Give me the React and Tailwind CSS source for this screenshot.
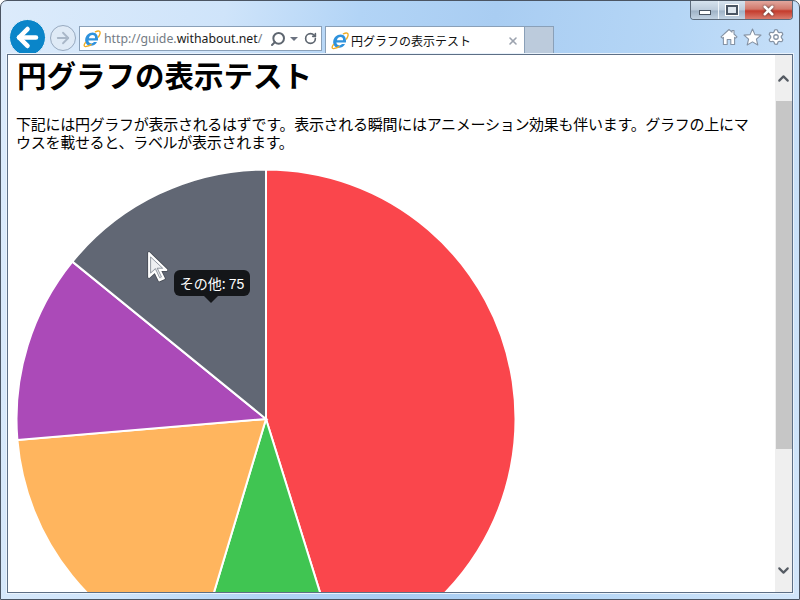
import React from "react";
import { ArrowLeft, ArrowRight, Search, RotateCw, Settings, ChevronUp, ChevronDown, X } from "lucide-react";

function IeIcon() {
  return (
    <svg width="18" height="18" viewBox="0 0 18 18" className="shrink-0">
      <path d="M9.6 2.4C5.8 2.4 2.6 5.4 2.2 9.4C1.8 13.2 4.4 15.8 8 15.8C10.8 15.8 13 14.4 14 12H10.8C10.2 13 9.3 13.4 8.3 13.4C6.6 13.4 5.4 12.2 5.4 10.6H14.9C15.7 5.8 13.4 2.4 9.6 2.4ZM5.9 8.2C6.4 6.2 7.8 5 9.4 5C11.2 5 12.2 6.2 12.1 8.2Z" fill="#2f92dc" />
      <path d="M2.4 12.6C0.2 15.6 1 17.4 4.6 16.2C6 15.7 7 15.2 8 14.6M12.4 1.8C15.4 0.4 17.6 0.8 17 3.6C16.8 4.6 16.2 5.8 15.4 7" fill="none" stroke="#f0ad24" strokeWidth="1.4" strokeLinecap="round" />
    </svg>
  );
}

function HomeIcon() {
  return (
    <svg width="18" height="18" viewBox="0 0 18 18">
      <path d="M9 1.5L12 4.2V2.5H14V6L17 8.8L15.6 10.2L14.6 9.3V16.5H10.8V11.5H7.2V16.5H3.4V9.3L2.4 10.2L1 8.8Z" fill="#ffffff" stroke="#8593a5" strokeWidth="1.1" strokeLinejoin="round" />
    </svg>
  );
}

function StarIcon() {
  return (
    <svg width="19" height="18" viewBox="0 0 19 18">
      <path d="M9.5 1L11.9 6.6L18 7.1L13.4 11.1L14.8 17L9.5 13.9L4.2 17L5.6 11.1L1 7.1L7.1 6.6Z" fill="#ffffff" stroke="#8593a5" strokeWidth="1.1" strokeLinejoin="round" />
    </svg>
  );
}

function Pie() {
  const r = 249.5;
  const c = 250;
  const angles = [0, 162.7, 196.7, 265.2, 309.1, 360];
  const colors = ["#fa464c", "#40c552", "#ffb55e", "#ab4ab8", "#616774"];
  const pt = (a) => {
    const t = (a * Math.PI) / 180;
    return `${(c + r * Math.sin(t)).toFixed(2)} ${(c - r * Math.cos(t)).toFixed(2)}`;
  };
  return (
    <svg width="500" height="500" viewBox="0 0 500 500" className="block shrink-0 mt-[18px]">
      {colors.map((col, i) => (
        <path
          key={col}
          d={`M${c} ${c}L${pt(angles[i])}A${r} ${r} 0 ${angles[i + 1] - angles[i] > 180 ? 1 : 0} 1 ${pt(angles[i + 1])}Z`}
          fill={col}
          stroke="#ffffff"
          strokeWidth="2"
        />
      ))}
    </svg>
  );
}

export default function App() {
  return (
    <div className="relative w-[800px] h-[600px] overflow-hidden flex flex-col rounded-t-[7px] border border-[#4b5563] bg-[linear-gradient(100deg,#dcebfb_0%,#cfe4fa_25%,#b2d4f6_40%,#a9cdf2_55%,#b5d6f6_75%,#d3e6fa_100%)] font-['Noto_Sans_CJK_JP',sans-serif]">
      {/* caption buttons */}
      <div className="absolute top-0 right-[6px] flex h-[19px] rounded-b-[4px] overflow-hidden border border-t-0 border-[#5d6b7c]">
        <div className="w-[28px] flex items-center justify-center bg-[linear-gradient(#d6e2ee,#bccbdb_50%,#9fb2c6_55%,#c2d2e2)] border-r border-[#eef4fa]">
          <div className="w-[12px] h-[5px] mt-[5px] bg-white border border-[#4a5563]" />
        </div>
        <div className="w-[26px] flex items-center justify-center bg-[linear-gradient(#d6e2ee,#bccbdb_50%,#9fb2c6_55%,#c2d2e2)]">
          <div className="w-[12px] h-[10px] border-2 border-[#4a5563] bg-[#dfe7ef] outline outline-white" />
        </div>
        <div className="w-[47px] flex items-center justify-center bg-[linear-gradient(#e2a79e,#d2796c_45%,#c43b2c_55%,#d97b6d)]">
          <X size={15} strokeWidth={4} color="#ffffff" className="drop-shadow-[0_0_1px_#333333]" />
        </div>
      </div>

      {/* toolbar */}
      <div className="h-[53px] shrink-0 flex items-start pl-[8px] pr-[5px]">
        <div className="mt-[18px] w-[37px] h-[37px] rounded-full bg-[#0a85c9] flex items-center justify-center border border-[#e6f1fb]">
          <ArrowLeft size={29} strokeWidth={3.8} color="#ffffff" />
        </div>
        <div className="mt-[24px] ml-[4px] w-[26px] h-[26px] rounded-full border border-[#97a9bf] bg-[#dfeaf6] flex items-center justify-center">
          <ArrowRight size={18} strokeWidth={2.4} color="#a9b7c8" />
        </div>
        <div className="mt-[25px] ml-[3px] w-[243px] h-[25px] flex items-center bg-white border border-[#8aa0b8] pl-[3px] pr-[3px]">
          <IeIcon />
          <div className="ml-[3px] w-[160px] overflow-hidden whitespace-nowrap text-[12.3px] leading-[16px] font-['Noto_Sans',sans-serif] text-[#737b84]">
            http://guide.<span className="text-[#1a1a1a]">withabout.net</span>/
          </div>
          <Search size={16} strokeWidth={3} color="#5e6670" className="ml-[6px] -scale-x-100" />
          <div className="ml-[4px] w-0 h-0 border-x-[4px] border-x-transparent border-t-[4px] border-t-[#6b7280]" />
          <RotateCw size={13} strokeWidth={3} color="#5e6670" className="ml-[6px]" />
        </div>
        <div className="mt-[25px] ml-[3px] w-[200px] h-[28px] flex items-center bg-white border border-b-0 border-[#8aa0b8] pl-[5px] pr-[5px]">
          <IeIcon />
          <span className="ml-[2px] flex-1 text-[12px] leading-[16px] text-[#111111] whitespace-nowrap">円グラフの表示テスト</span>
          <X size={12} strokeWidth={3.2} color="#9ca3af" />
        </div>
        <div className="mt-[25px] w-[29px] h-[27px] bg-[#bccbdc] border border-l-0 border-b-0 border-[#8aa0b8]" />
        <div className="flex-1 mt-[27px] flex justify-end items-center gap-[5px] pr-[9px]">
          <HomeIcon />
          <StarIcon />
          <Settings size={18} strokeWidth={1.7} color="#8593a5" fill="#ffffff" />
        </div>
      </div>

      {/* page area */}
      <div className="flex-1 min-h-0 mx-[6px] mb-[6px] flex bg-white border border-[#5d6f86] shadow-[0_0_0_1px_#eaf3fc]">
        <div className="relative flex-1 min-w-0 overflow-hidden px-2 text-black">
          <h1 className="text-[29.5px] leading-[38px] font-bold ml-px whitespace-nowrap">円グラフの表示テスト</h1>
          <p className="text-[15px] tracking-[-0.28px] leading-[18px] mt-[22px] pr-[12px] font-normal">
            下記には円グラフが表示されるはずです。表示される瞬間にはアニメーション効果も伴います。グラフの上にマウスを載せると、ラベルが表示されます。
          </p>
          <Pie />
          {/* tooltip */}
          <div className="absolute left-[166px] top-[215px] w-[76px] h-[26px] rounded-[6px] bg-[#141619] text-white text-[14px] leading-[26px] text-center whitespace-nowrap">
            その他: <span className="font-['Liberation_Sans',sans-serif]">75</span>
            <div className="absolute left-[30px] top-[26px] w-0 h-0 border-x-[7px] border-x-transparent border-t-[7px] border-t-[#141619]" />
          </div>
          {/* cursor */}
          <svg width="22" height="32" viewBox="0 0 22 32" className="absolute left-[138px] top-[196px]">
            <path d="M3 2V26L9 20.5L13.4 29.5L18 27.5L13.8 19H20.5Z" fill="#f1f3f5" stroke="#2f343b" strokeWidth="3.4" strokeLinejoin="round" opacity="0.55" />
            <path d="M3 2V26L9 20.5L13.4 29.5L18 27.5L13.8 19H20.5Z" fill="#eef0f2" stroke="#ffffff" strokeWidth="1.8" strokeLinejoin="round" />
            <path d="M4.6 6V22L9.4 17.6L13.6 26.6L15.4 25.8L11.2 17.2H16.6Z" fill="none" stroke="#6b7280" strokeWidth="0.7" />
          </svg>
        </div>
        <div className="w-[17px] shrink-0 bg-[#efefef] flex flex-col items-center">
          <div className="h-[46px] flex items-center justify-center shrink-0">
            <ChevronUp size={17} strokeWidth={3} color="#555b63" />
          </div>
          <div className="w-[16px] h-[348px] bg-[#c6c6c6] shrink-0" />
          <div className="flex-1 flex items-end justify-center pb-[13px]">
            <ChevronDown size={17} strokeWidth={3} color="#555b63" />
          </div>
        </div>
      </div>
    </div>
  );
}
